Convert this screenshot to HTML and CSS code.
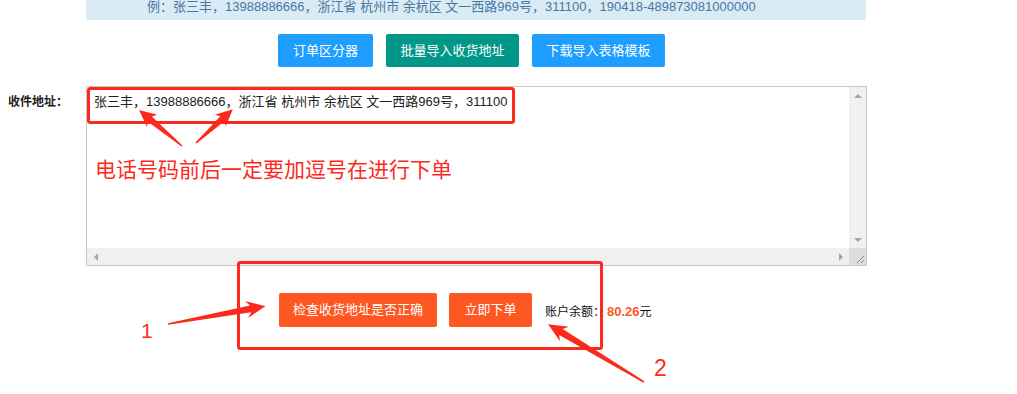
FILE: index.html
```html
<!DOCTYPE html>
<html lang="zh-CN">
<head>
<meta charset="utf-8">
<title>收件地址</title>
<link rel="stylesheet" href="styles.css">
</head>
<body>
<div class="page">
  <div class="tip"><span class="tip-text">例：张三丰，13988886666，浙江省 杭州市 余杭区 文一西路969号，311100，190418-489873081000000</span></div>

  <div class="btn-row">
    <button class="btn btn-blue w95">订单区分器</button>
    <button class="btn btn-teal w133">批量导入收货地址</button>
    <button class="btn btn-blue w133">下载导入表格模板</button>
  </div>

  <div class="form-row">
    <label class="form-label">收件地址：</label>
    <div class="ta-box">
      <textarea class="ta" wrap="off">张三丰，13988886666，浙江省 杭州市 余杭区 文一西路969号，311100</textarea>
      <div class="vbar">
        <span class="sb-btn"><i class="tri tri-up"></i></span>
        <span class="sb-btn"><i class="tri tri-down"></i></span>
      </div>
      <div class="hbar">
        <span class="sb-btn"><i class="tri tri-left"></i></span>
        <span class="sb-btn"><i class="tri tri-right"></i></span>
      </div>
      <div class="corner">
        <svg width="17" height="17" viewBox="0 0 17 17"><path d="M15 8 L8 15 M15 12 L12 15" stroke="#8a8a8a" stroke-width="1" fill="none"/></svg>
      </div>
    </div>
  </div>

  <div class="action-row">
    <button class="btn btn-orange w158">检查收货地址是否正确</button>
    <button class="btn btn-orange w83">立即下单</button>
    <span class="balance">账户余额：<b class="money">80.26</b>元</span>
  </div>

  <div class="note">电话号码前后一定要加逗号在进行下单</div>
  <div class="num num-1">1</div>
  <div class="num num-2">2</div>

  <svg class="overlay" width="1017" height="394" viewBox="0 0 1017 394">
    <g fill="none" stroke="#fc2a1c" stroke-width="3">
      <rect x="88.5" y="88.5" width="425" height="34" rx="2"/>
      <rect x="238.5" y="262.5" width="363" height="86" rx="2"/>
    </g>
    <g fill="#fc2a1c">
      <polygon transform="translate(182 146) rotate(-140.1)" points="0,-0.7 42,-3.3 39,-8 56,0 39,8 42,3.3 0,0.7"/>
      <polygon transform="translate(196 143) rotate(-42.6)" points="0,-0.7 36,-3.3 33,-8 50,0 33,8 36,3.3 0,0.7"/>
      <polygon transform="translate(168 324) rotate(-10.4)" points="0,-0.8 84,-3.5 80,-8.5 99,0 80,8.5 84,3.5 0,0.8"/>
      <polygon transform="translate(644 382) rotate(-148.9)" points="0,-0.8 97,-3.5 93,-8.5 112,0 93,8.5 97,3.5 0,0.8"/>
    </g>
  </svg>
</div>
</body>
</html>
```

FILE: styles.css
```css
* { box-sizing: border-box; }

html, body {
  margin: 0;
  padding: 0;
  background: #fff;
}

body {
  font-family: "Liberation Sans", "Noto Sans CJK SC", sans-serif;
  color: #333;
  font-size: 12px;
}

.page {
  position: relative;
  width: 1017px;
  height: 394px;
  overflow: hidden;
}

.tip {
  margin-left: 86px;
  width: 780px;
  height: 20px;
  background: #d9ebf5;
  padding-left: 61px;
  overflow: hidden;
}

.tip-text {
  display: inline-block;
  font-size: 13px;
  line-height: 10px;
  color: #4878a0;
  white-space: nowrap;
}

.btn-row {
  display: flex;
  gap: 13px;
  margin-top: 14px;
  padding-left: 278px;
}

.btn {
  height: 33px;
  border: none;
  border-radius: 2px;
  color: #fff;
  font-family: "Liberation Sans", "Noto Sans CJK SC", sans-serif;
  font-size: 13px;
  padding: 0;
  text-align: center;
  line-height: 33px;
}

.btn-blue { background: #1e9fff; }
.btn-teal { background: #009688; }
.btn-orange { background: #ff5722; height: 34px; line-height: 34px; }

.w95 { width: 95px; }
.w133 { width: 133px; }
.w158 { width: 158px; }
.w83 { width: 83px; }

.form-row {
  display: grid;
  grid-template-columns: 86px 781px;
  margin-top: 19px;
}

.form-label {
  padding-left: 8px;
  padding-top: 8px;
  font-weight: bold;
  font-size: 12px;
  line-height: 16px;
  color: #222;
}

.ta-box {
  display: grid;
  grid-template-columns: 1fr 17px;
  grid-template-rows: 1fr 17px;
  height: 180px;
  border: 1px solid #c9c9c9;
  background: #fff;
}

.ta {
  display: block;
  border: none;
  outline: none;
  resize: none;
  overflow: hidden;
  white-space: pre;
  margin: 0;
  padding: 6px 7px;
  font-family: "Liberation Sans", "Noto Sans CJK SC", sans-serif;
  font-size: 13px;
  line-height: 18px;
  color: #222;
  background: #fff;
  width: 100%;
  height: 100%;
}

.vbar {
  display: flex;
  flex-direction: column;
  justify-content: space-between;
  background: #f0f0f0;
}

.hbar {
  display: flex;
  justify-content: space-between;
  background: #f0f0f0;
}

.sb-btn {
  display: flex;
  align-items: center;
  justify-content: center;
  width: 17px;
  height: 17px;
}

.tri {
  display: block;
  width: 0;
  height: 0;
}

.tri-up {
  border-left: 4px solid transparent;
  border-right: 4px solid transparent;
  border-bottom: 4px solid #a3a3a3;
}

.tri-down {
  border-left: 4px solid transparent;
  border-right: 4px solid transparent;
  border-top: 4px solid #a3a3a3;
}

.tri-left {
  border-top: 4px solid transparent;
  border-bottom: 4px solid transparent;
  border-right: 4px solid #a3a3a3;
}

.tri-right {
  border-top: 4px solid transparent;
  border-bottom: 4px solid transparent;
  border-left: 4px solid #a3a3a3;
}

.corner {
  background: #dcdcdc;
  line-height: 0;
}

.action-row {
  display: flex;
  align-items: center;
  margin-top: 27px;
  padding-left: 279px;
}

.action-row .w83 { margin-left: 12px; }

.balance {
  margin-left: 13px;
  font-size: 12px;
  color: #111;
}

.money {
  color: #ff5722;
  font-size: 13px;
  margin-left: 2px;
}

.note {
  position: absolute;
  left: 95px;
  top: 157px;
  font-size: 21px;
  line-height: 26px;
  color: #fc2a1c;
  white-space: nowrap;
}

.num {
  position: absolute;
  color: #fc2a1c;
  line-height: 1;
}

.num-1 { left: 141px; top: 320px; font-size: 21px; }
.num-2 { left: 654px; top: 357px; font-size: 23px; }

.overlay {
  position: absolute;
  left: 0;
  top: 0;
  pointer-events: none;
}
```
